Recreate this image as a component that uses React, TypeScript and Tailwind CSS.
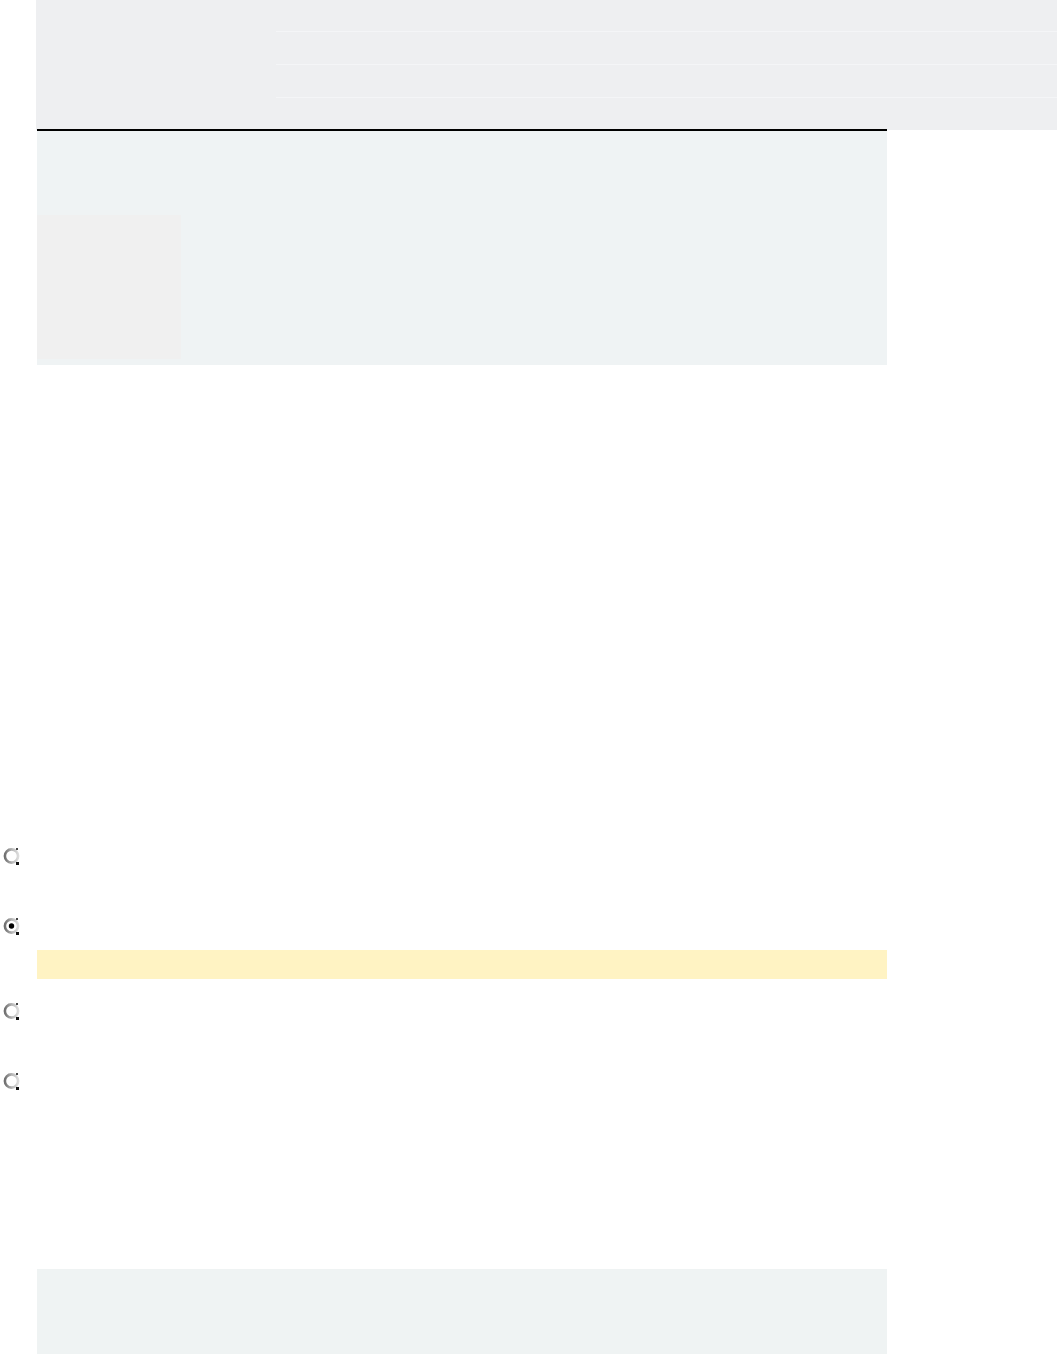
import React from 'react'

function Radio({ checked = false }: { checked?: boolean }) {
  const gid = checked ? 'rg-on' : 'rg-off'
  return (
    <svg width="18" height="18" viewBox="0 0 18 18" className="block">
      <defs>
        <linearGradient id={gid} x1="0" y1="0" x2="1" y2="0">
          <stop offset="0" stopColor="#6f6f6f" />
          <stop offset="0.55" stopColor="#b8b8b8" />
          <stop offset="1" stopColor="#dcdcdc" />
        </linearGradient>
      </defs>
      <circle cx="8.5" cy="9" r="6.6" fill="#fff" stroke={`url(#${gid})`} strokeWidth="2.6" />
      <rect x="13" y="1" width="2" height="2" fill="#444" />
      <rect x="13" y="15" width="3" height="3" fill="#111" />
      {checked && <circle cx="8.5" cy="9" r="2.7" fill="#000" />}
    </svg>
  )
}

function Option({ checked = false, className = '' }: { checked?: boolean; className?: string }) {
  return (
    <div className={`ml-[3px] ${className}`}>
      <Radio checked={checked} />
    </div>
  )
}

export default function App() {
  return (
    <div className="min-h-[1354px] bg-white font-['Liberation_Sans',sans-serif]">
      {/* Header banner */}
      <header className="ml-[36px] h-[130px] bg-[#eeeff1] flex">
        <div className="w-[240px]" />
        <div className="flex-1 flex flex-col">
          <div className="h-[32px] border-b border-[#f4f5f7]" />
          <div className="h-[33px] border-b border-[#f4f5f7]" />
          <div className="h-[33px] border-b border-[#f4f5f7]" />
        </div>
      </header>

      <div className="relative -mt-px ml-[37px] w-[850px] h-[2px] bg-black" />

      {/* Media panel */}
      <section className="ml-[37px] w-[850px] h-[234px] bg-[#eff3f4] pt-[84px]">
        <div className="w-[144px] h-[144px] bg-[#f0f0f0]" />
      </section>

      {/* Answer options */}
      <Option className="mt-[482px]" />
      <Option checked className="mt-[52px]" />
      <div className="mt-[15px] ml-[37px] w-[850px] h-[29px] bg-[#fff3c3]" />
      <Option className="mt-[23px]" />
      <Option className="mt-[52px]" />

      {/* Footer panel */}
      <div className="mt-[179px] ml-[37px] w-[850px] h-[85px] bg-[#eff3f3]" />
    </div>
  )
}
